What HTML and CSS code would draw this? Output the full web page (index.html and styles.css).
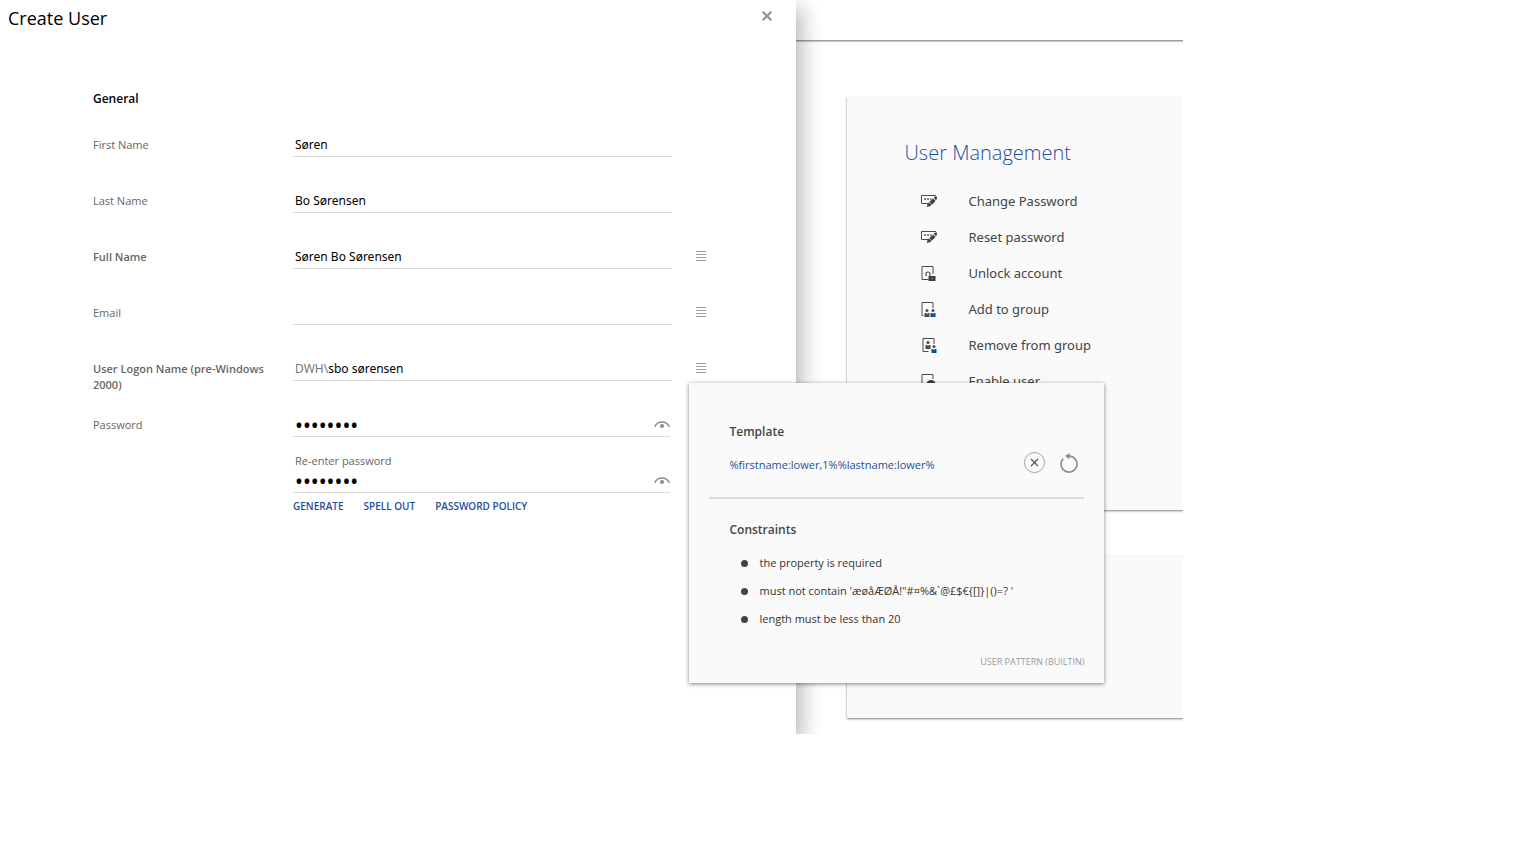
FILE: index.html
```html
<!DOCTYPE html>
<html lang="en">
<head>
<meta charset="utf-8">
<title>Create User</title>
<link rel="stylesheet" href="styles.css">
</head>
<body>
<svg class="sprite" aria-hidden="true">
  <symbol id="i-menu" viewBox="0 0 10 10"><path d="M0 .5h10M0 3.5h10M0 6.5h10M0 9.5h10" stroke="#9e9e9e" fill="none"/></symbol>
  <symbol id="i-eye" viewBox="0 0 16 8"><path d="M.5 5.8C2.3 2.7 4.8 1 8 1s5.700 1.700 7.500 4.800" stroke="#8a8a8a" stroke-width="1.300" fill="none"/><circle cx="8" cy="5" r="2" fill="#8a8a8a"/></symbol>
  <symbol id="i-key" viewBox="0 0 16 12"><path d="M15 .5H.5v8H7" stroke="#4a4a4a" fill="none"/><path d="M3 3h2v2H3zM6 3h2v2H6zM9 3h1.500v2H9z" fill="#888"/><path d="M5.800 12l.8-3.200L8 7.400 10.400 9.800 9 11.200zM8.300 7.100L12 3.400l2.600 2.600-3.700 3.700zM12.600 2.800L14 1.400h2v2l-1 1.800z" fill="#444"/></symbol>
  <symbol id="i-unlock" viewBox="0 0 15 15"><path d="M7 13.500H.5V.5h11V8" stroke="#4a4a4a" fill="none"/><path d="M4.500 10V8q0-2 2-2t2 2v3" stroke="#4a4a4a" fill="none" stroke-width="1.200"/><path d="M7 10h7v5H7z" fill="#3c3c3c"/><path d="M10.500 11.500v2" stroke="#999"/></symbol>
  <symbol id="i-add" viewBox="0 0 15 15"><path d="M2 13.500H.5V.5h11V6" stroke="#4a4a4a" fill="none"/><circle cx="5.500" cy="8.500" r="1.500" fill="#4a4a4a"/><circle cx="11.500" cy="8.500" r="1.500" fill="#4a4a4a"/><path d="M3 11h1.500l1 1 1-1H8v4H3z" fill="#4a4a4a"/><path d="M9 11h1.500l1 1 1-1H14v4H9z" fill="#0a4fa0"/></symbol>
  <symbol id="i-remove" viewBox="0 0 15 15"><path d="M7 13.500H1.500V.5h11V6" stroke="#4a4a4a" fill="none"/><circle cx="6.500" cy="4.500" r="1.600" fill="#4a4a4a"/><path d="M4 7h1.500l1 1 1-1H9v4H4z" fill="#4a4a4a"/><circle cx="12.500" cy="8.500" r="1.500" fill="#4a4a4a"/><path d="M10 11h1.500l1 1 1-1H15v4h-5z" fill="#0a4fa0"/></symbol>
  <symbol id="i-enable" viewBox="0 0 15 15"><path d="M5 13.500H.5V.5h11V5" stroke="#4a4a4a" fill="none"/><circle cx="9.500" cy="10.500" r="4.500" fill="#3c3c3c"/></symbol>
</svg>
<div class="app">
  <section class="drawer">
    <header class="drawer-head">
      <h1 class="title">Create User</h1>
      <button class="icon-btn" type="button" aria-label="Close"><svg width="10" height="10" viewBox="0 0 10 10"><path d="M.7.7l8.600 8.600M9.300.7L.7 9.300" stroke="#8e8e8e" stroke-width="2"/></svg></button>
    </header>
    <form class="form">
      <h2 class="section">General</h2>
      <div class="row"><label class="label" for="first">First Name</label><div class="field"><input class="input" id="first" value="Søren"></div></div>
      <div class="row"><label class="label" for="last">Last Name</label><div class="field"><input class="input" id="last" value="Bo Sørensen"></div></div>
      <div class="row"><label class="label required" for="full">Full Name</label><div class="field"><input class="input" id="full" value="Søren Bo Sørensen"></div>
        <div class="more"><button class="icon-btn" type="button" aria-label="Full name options"><svg width="10" height="10"><use href="#i-menu"/></svg></button></div></div>
      <div class="row"><label class="label" for="email">Email</label><div class="field"><input class="input" id="email" type="email"></div>
        <div class="more"><button class="icon-btn" type="button" aria-label="Email options"><svg width="10" height="10"><use href="#i-menu"/></svg></button></div></div>
      <div class="row"><label class="label required" for="logon">User Logon Name (pre-Windows 2000)</label><div class="field"><span class="prefix">DWH\</span><input class="input" id="logon" value="sbo sørensen"></div>
        <div class="more"><button class="icon-btn" type="button" aria-label="Logon name options"><svg width="10" height="10"><use href="#i-menu"/></svg></button>
          <aside class="popover">
            <div class="pop-part">
              <h3 class="pop-title">Template</h3>
              <div class="template">
                <a class="pattern" href="#">%firstname:lower,1%%lastname:lower%</a>
                <button class="icon-btn" type="button" aria-label="Clear template"><svg width="21" height="21" viewBox="0 0 21 21"><circle cx="10.500" cy="10.500" r="10" stroke="#a3a3a3" fill="none"/><path d="M7 7l7 7M14 7l-7 7" stroke="#555" stroke-width="1.200"/></svg></button>
                <button class="icon-btn" type="button" aria-label="Reset template"><svg width="18" height="20" viewBox="0 0 18 20"><path d="M3.200 5.600A8 8 0 1 0 9.500 3.100H7" stroke="#8c8c8c" stroke-width="1.600" fill="none"/><path d="M5 3.100L9.500 0v6.200z" fill="#8c8c8c"/></svg></button>
              </div>
            </div>
            <hr class="rule">
            <div class="pop-part">
              <h3 class="pop-title">Constraints</h3>
              <ul class="constraints">
                <li>the property is required</li>
                <li>must not contain 'æøåÆØÅ!"#¤%&amp;`@£$€{[]}|()=? '</li>
                <li>length must be less than 20</li>
              </ul>
            </div>
            <p class="source">USER PATTERN (BUILTIN)</p>
          </aside>
        </div></div>
      <div class="row"><label class="label" for="pw">Password</label>
        <div class="passwords">
          <div class="field"><input class="input secret" id="pw" type="password" value="password"><button class="icon-btn" type="button" aria-label="Show password"><svg width="16" height="8"><use href="#i-eye"/></svg></button></div>
          <label class="sublabel" for="pw2">Re-enter password</label>
          <div class="field"><input class="input secret" id="pw2" type="password" value="password"><button class="icon-btn" type="button" aria-label="Show repeated password"><svg width="16" height="8"><use href="#i-eye"/></svg></button></div>
          <div class="links"><a href="#">GENERATE</a><a href="#">SPELL OUT</a><a href="#">PASSWORD POLICY</a></div>
        </div></div>
    </form>
  </section>
  <main class="page">
    <div class="topbar"></div>
    <div class="cards">
      <section class="card tall">
        <h2 class="card-title">User Management</h2>
        <ul class="actions">
          <li><svg width="16" height="12"><use href="#i-key"/></svg>Change Password</li>
          <li><svg width="16" height="12"><use href="#i-key"/></svg>Reset password</li>
          <li><svg width="16" height="15"><use href="#i-unlock"/></svg>Unlock account</li>
          <li><svg width="16" height="15"><use href="#i-add"/></svg>Add to group</li>
          <li><svg width="16" height="15"><use href="#i-remove"/></svg>Remove from group</li>
          <li><svg width="16" height="15"><use href="#i-enable"/></svg>Enable user</li>
        </ul>
      </section>
      <section class="card"></section>
    </div>
  </main>
</div>
</body>
</html>
```

FILE: styles.css
```css
* { box-sizing: border-box; }
body {
  margin: 0;
  background: #fff;
  color: #000;
  font: 11px/16px "Open Sans", "Noto Sans", sans-serif;
}
h1, h2, h3, p, ul { margin: 0; padding: 0; }
ul { list-style: none; }
a { color: #24509a; text-decoration: none; }
.sprite { display: none; }

.app {
  display: grid;
  grid-template-columns: 796fr 386fr;
  width: 77%;
  overflow: hidden;
}

.drawer {
  position: relative;
  z-index: 1;
  background: #fff;
  box-shadow: 6px 8px 20px rgba(0, 0, 0, .28);
}
.drawer-head {
  display: flex;
  justify-content: space-between;
  align-items: flex-start;
  padding: 6px 24px 0 8px;
}
.title { font-size: 18px; line-height: 24px; font-weight: 400; }
.icon-btn {
  display: flex;
  flex: none;
  padding: 0;
  border: 0;
  background: none;
  cursor: pointer;
}
.drawer-head .icon-btn { margin-top: 5px; }

.form { padding: 61px 88px 0 93px; }
.section { margin-bottom: 26px; font-size: 12px; font-weight: 600; }
.row {
  display: grid;
  grid-template-columns: 200px 1fr 12px;
  align-items: start;
  min-height: 56px;
}
.label { padding: 4px 20px 0 0; color: #666; }
.required { font-weight: 600; }
.field {
  display: flex;
  align-items: center;
  height: 24px;
  margin-right: 24px;
  padding-left: 2px;
  border-bottom: 1px solid #dadada;
}
.prefix { color: #777; font: 12px/18px "Noto Sans", sans-serif; }
.input {
  flex: 1;
  min-width: 0;
  padding: 0;
  border: 0;
  outline: 0;
  background: none;
  color: #000;
  font: 12px/18px "Noto Sans", sans-serif;
}
.secret { height: 23px; font-size: 21px; }
.more { position: relative; padding-top: 6px; }
.passwords { display: grid; padding-right: 2px; }
.sublabel { margin: 16px 0 0 2px; color: #666; }
.links {
  display: flex;
  gap: 20px;
  margin-top: 5px;
  font-size: 10px;
  font-weight: 600;
}

.popover {
  position: absolute;
  top: 26px;
  left: -7px;
  width: 415px;
  padding: 41px 20px 13px;
  background: #fafafa;
  color: #333;
  box-shadow: 0 1px 4px rgba(0, 0, 0, .5);
}
.pop-part { padding: 0 6px 0 20px; }
.pop-title { color: #444; font-size: 12px; font-weight: 600; }
.template {
  display: flex;
  align-items: center;
  gap: 15px;
  margin-top: 12px;
}
.pattern { flex: 1; padding-top: 4px; }
.rule {
  height: 2px;
  margin: 24px 0 23px;
  border: 0;
  background: #dcdcdc;
}
.constraints { margin-top: 11px; }
.constraints li {
  display: flex;
  align-items: center;
  gap: 11px;
  padding: 6px 0 6px 12px;
}
.constraints li::before {
  width: 7px;
  height: 7px;
  border-radius: 50%;
  background: #444;
  content: "";
}
.source {
  margin-top: 21px;
  color: #9a9a9a;
  font-size: 9px;
  text-align: right;
}

.topbar {
  height: 41px;
  border-bottom: 1px solid #9e9e9e;
  box-shadow: 0 1px 1px rgba(0, 0, 0, .2);
}
.cards {
  display: grid;
  gap: 46px;
  padding: 56px 0 16px 51px;
}
.card {
  min-height: 162px;
  padding: 42px 0 0 57px;
  background: #fafafa;
  box-shadow: 0 1px 2px rgba(0, 0, 0, .5);
}
.tall { min-height: 413px; }
.card-title {
  color: #24509a;
  font-size: 20px;
  line-height: 28px;
  font-weight: 300;
}
.actions { margin-top: 16px; color: #444; font: 13px/36px "Noto Sans", sans-serif; }
.actions li {
  display: flex;
  align-items: center;
  gap: 31px;
  padding-left: 17px;
}
```
